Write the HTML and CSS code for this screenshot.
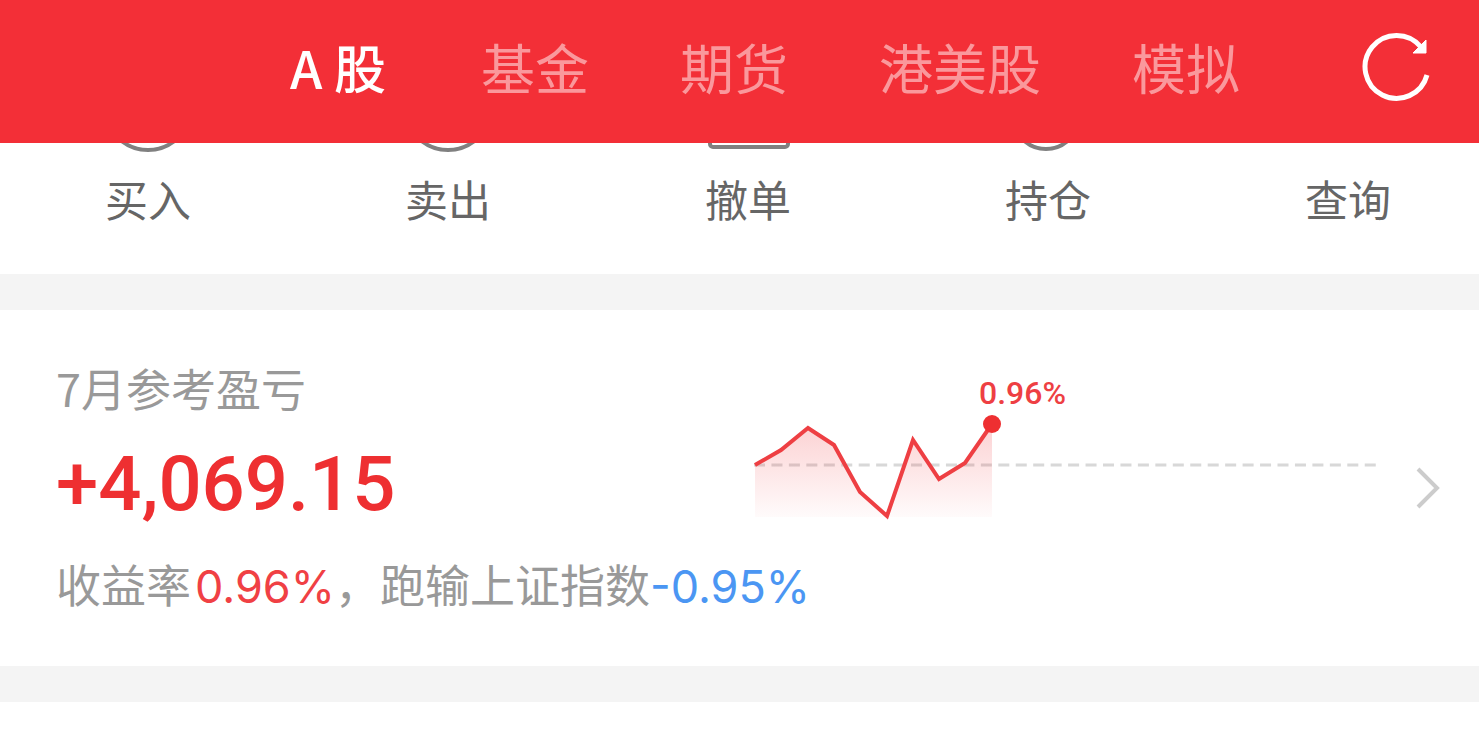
FILE: index.html
```html
<!DOCTYPE html>
<html lang="zh-CN">
<head>
<meta charset="UTF-8">
<meta name="viewport" content="width=device-width, initial-scale=1.0">
<title>A股</title>
<link rel="stylesheet" href="styles.css">
</head>
<body>

<header class="header">
    <nav class="tabs">
        <a href="#" class="tab active">A 股</a>
        <a href="#" class="tab">基金</a>
        <a href="#" class="tab">期货</a>
        <a href="#" class="tab">港美股</a>
        <a href="#" class="tab">模拟</a>
    </nav>
    <button type="button" class="refresh" aria-label="刷新">
        <svg viewBox="0 0 70 70" fill="none" stroke="#fff">
            <path d="M66 43 A31.5 31.5 0 1 1 60 15" stroke-width="5"/>
            <path d="M65 8 V21 H52 Z" fill="#fff" stroke-width="1"/>
        </svg>
    </button>
</header>

<main>
    <!-- 快捷操作 -->
    <nav class="actions">
        <a href="#" class="action">
            <svg viewBox="0 0 86 12"><circle cx="43" cy="-36" r="43"/></svg>
            <span>买入</span>
        </a>
        <a href="#" class="action">
            <svg viewBox="0 0 86 12"><circle cx="43" cy="-36" r="43"/></svg>
            <span>卖出</span>
        </a>
        <a href="#" class="action">
            <svg viewBox="0 0 86 12"><rect x="5" y="-72" width="78" height="76" rx="3"/></svg>
            <span>撤单</span>
        </a>
        <a href="#" class="action">
            <svg viewBox="0 0 86 12"><circle cx="41" cy="-27" r="33"/></svg>
            <span>持仓</span>
        </a>
        <a href="#" class="action">
            <svg viewBox="0 0 86 12"></svg>
            <span>查询</span>
        </a>
    </nav>

    <!-- 月度盈亏 -->
    <a href="#" class="profit">
        <div class="label">7月参考盈亏</div>
        <div class="amount">+4,069.15</div>
        <svg class="chart" viewBox="0 0 622 150">
            <defs>
                <linearGradient id="fade" x1="0" y1="0" x2="0" y2="1">
                    <stop offset="0" stop-color="#f12f35" stop-opacity="0.22"/>
                    <stop offset="1" stop-color="#f12f35" stop-opacity="0.02"/>
                </linearGradient>
            </defs>
            <path class="base" d="M-1 95 H622"/>
            <path fill="url(#fade)" d="M0 95 L26 80 L53 58 L79 75 L105 122 L132 146 L158 70 L184 109 L210 93 L237 54 V147 H0 Z"/>
            <polyline class="line" points="0,95 26,80 53,58 79,75 105,122 132,146 158,70 184,109 210,93 237,54"/>
            <circle class="dot" cx="237" cy="54" r="9"/>
            <text class="rate" x="224" y="34">0.96%</text>
        </svg>
        <div class="summary">收益率<span class="num up">0.96%</span>，跑输上证指数<span class="num down">-0.95%</span></div>
        <svg class="arrow" viewBox="0 0 24 42"><path d="M2 2 L21 21 L2 40"/></svg>
    </a>
</main>

</body>
</html>
```
FILE: styles.css
```css
body {
    margin: 0;
    background-color: #fff;
    color: #666;
    font-family: "Noto Sans CJK SC", sans-serif;
}

a {
    color: inherit;
    text-decoration: none;
}

/* 顶部导航 */
.header {
    display: flex;
    align-items: center;
    justify-content: flex-end;
    box-sizing: border-box;
    height: 143px;
    padding: 0 48px 10px;
    background-color: #f32f37;
}

.tabs {
    display: flex;
    gap: 91px;
    margin-right: 121px;
}

.tab {
    font-size: 54px;
    line-height: 80px;
    color: #fa989c;
    white-space: nowrap;
}

.tab.active {
    margin-right: 4px;
    color: #fff;
    font-size: 52px;
    font-weight: 500;
}

.refresh {
    width: 70px;
    height: 70px;
    padding: 0;
    border: none;
    background: none;
    cursor: pointer;
}

.refresh svg {
    display: block;
}

/* 图标上半部分被导航栏遮住 */
.actions {
    display: flex;
    justify-content: space-between;
    padding: 0 88px 44px 105px;
}

.action {
    font-size: 43px;
    line-height: 64px;
}

.action svg {
    display: block;
    width: 86px;
    height: 12px;
    margin-bottom: 11px;
    overflow: hidden;
    fill: none;
    stroke: #808080;
    stroke-width: 4;
}

.action span {
    display: block;
}

/* 盈亏卡片 */
.profit {
    display: grid;
    grid-template-columns: 699fr 661fr 24px;
    grid-template-areas:
        "label chart arrow"
        "amount chart arrow"
        "summary summary arrow";
    align-items: center;
    padding: 48px 39px 48px 56px;
    border-top: 36px solid #f4f4f4;
    border-bottom: 36px solid #f4f4f4;
}

.label {
    grid-area: label;
    font-size: 45px;
    line-height: 60px;
    color: #999;
}

.amount {
    grid-area: amount;
    font-family: Roboto, sans-serif;
    font-size: 76px;
    font-weight: 500;
    line-height: 132px;
    color: #ee2f31;
}

.chart {
    grid-area: chart;
    align-self: start;
    box-sizing: border-box;
    width: 100%;
    margin-top: 12px;
    padding-right: 39px;
    overflow: visible;
}

.base {
    fill: none;
    stroke: #d8d8d8;
    stroke-width: 3;
    stroke-dasharray: 11 6.45;
}

.line {
    fill: none;
    stroke: #ee3f43;
    stroke-width: 4;
}

.dot {
    fill: #ee2f31;
}

.rate {
    fill: #ee3f43;
    font-family: Roboto, sans-serif;
    font-size: 32px;
    font-weight: 500;
}

.summary {
    grid-area: summary;
    font-size: 45px;
    line-height: 68px;
    color: #999;
    white-space: nowrap;
}

.num {
    font-family: Inter, sans-serif;
    line-height: 1;
}

.up {
    margin-left: 4px;
    color: #f04044;
}

.down {
    color: #4b96f3;
}

.arrow {
    grid-area: arrow;
    width: 24px;
    fill: none;
    stroke: #ccc;
    stroke-width: 4;
}
```
